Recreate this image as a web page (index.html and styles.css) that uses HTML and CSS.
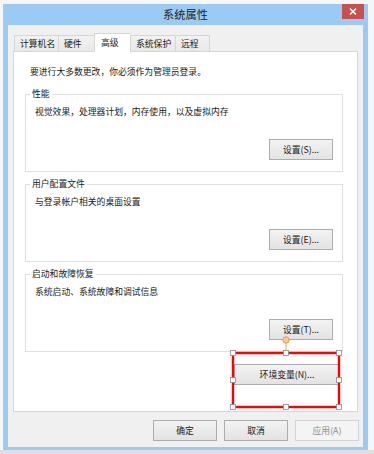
FILE: index.html
```html
<!DOCTYPE html>
<html lang="zh-CN">
<head>
<meta charset="utf-8">
<title>系统属性</title>
<link rel="stylesheet" href="styles.css">
</head>
<body>
<div class="window">
  <div class="titlebar">
    <span></span>
    <span class="title">系统属性</span>
    <span class="close"><svg width="22" height="15" viewBox="0 0 22 15"><path d="M8 4.5 L14 10.5 M14 4.5 L8 10.5" stroke="#fff" stroke-width="1.6"/></svg></span>
  </div>
  <div class="content">
    <div class="tabs">
      <div class="tab w44">计算机名</div>
      <div class="tab w36">硬件</div>
      <div class="tab w36 active">高级</div>
      <div class="tab w45">系统保护</div>
      <div class="tab w35 last">远程</div>
    </div>
    <div class="panel">
      <p class="note">要进行大多数更改，你必须作为管理员登录。</p>
      <div class="group g1">
        <div class="group-title">性能</div>
        <div class="desc">视觉效果，处理器计划，内存使用，以及虚拟内存</div>
        <div class="btn-row"><button class="btn">设置(S)...</button></div>
      </div>
      <div class="group">
        <div class="group-title">用户配置文件</div>
        <div class="desc">与登录帐户相关的桌面设置</div>
        <div class="btn-row"><button class="btn">设置(E)...</button></div>
      </div>
      <div class="group">
        <div class="group-title">启动和故障恢复</div>
        <div class="desc">系统启动、系统故障和调试信息</div>
        <div class="btn-row"><button class="btn">设置(T)...</button></div>
      </div>
      <div class="env-row"><button class="btn env">环境变量(N)...</button></div>
      <svg class="selection" width="116" height="78" viewBox="0 0 116 78">
        <line x1="58" y1="9" x2="58" y2="19" stroke="#f0a060" stroke-width="1"/>
        <circle cx="58" cy="6" r="3.2" fill="#fbc98a" stroke="#e8964a" stroke-width="1"/>
        <rect x="5" y="19" width="106" height="54" fill="none" stroke="#ff0000" stroke-width="2.4"/>
        <g fill="#fff" stroke="#8a8a8a" stroke-width="0.8">
          <rect x="2.5" y="16.5" width="5" height="5"/>
          <rect x="55.5" y="16.5" width="5" height="5"/>
          <rect x="108.5" y="16.5" width="5" height="5"/>
          <rect x="2.5" y="43.5" width="5" height="5"/>
          <rect x="108.5" y="43.5" width="5" height="5"/>
          <rect x="2.5" y="70.5" width="5" height="5"/>
          <rect x="55.5" y="70.5" width="5" height="5"/>
          <rect x="108.5" y="70.5" width="5" height="5"/>
        </g>
      </svg>
    </div>
    <div class="footer">
      <button class="btn">确定</button>
      <button class="btn">取消</button>
      <button class="btn disabled">应用(A)</button>
    </div>
  </div>
</div>
<div class="bottom-strip"></div>
</body>
</html>
```

FILE: styles.css
```css
* { box-sizing: border-box; }
html, body { margin: 0; padding: 0; }
body {
  background: #f6f6f6;
  font-family: "Noto Sans CJK SC", "Microsoft YaHei", sans-serif;
  font-size: 8.8px;
  color: #1a1a1a;
  width: 374px;
  height: 454px;
  overflow: hidden;
  padding-top: 4px;
}
.window {
  margin-left: 3px;
  width: 365px;
  height: 446px;
  background: #9bcbf4;
  padding: 0 5px 3px 5px;
  display: flex;
  flex-direction: column;
}
.titlebar {
  height: 21px;
  display: grid;
  grid-template-columns: 1fr auto 1fr;
  align-items: start;
}
.title {
  font-size: 11.2px;
  line-height: 21px;
  color: #222;
}
.close {
  justify-self: end;
  width: 22px;
  height: 15px;
  background: #c75050;
  margin-right: -1px;
  display: flex;
}
.content {
  flex: 1;
  background: #f0f0f0;
  padding: 8px 0 0 0;
  display: flex;
  flex-direction: column;
}
.tabs {
  display: flex;
  align-items: flex-end;
  height: 19px;
  margin-left: 6px;
  margin-bottom: -1px;
  position: relative;
  z-index: 1;
}
.tab {
  height: 17px;
  line-height: 16px;
  padding-left: 5px;
  background: linear-gradient(#f2f2f2, #e8e8e8);
  border: 1px solid #d6d6d6;
  border-right: none;
  border-bottom-color: #d6d6d6;
  white-space: nowrap;
}
.tab.last { border-right: 1px solid #d6d6d6; }
.tab.active {
  height: 19px;
  line-height: 17px;
  background: #fff;
  border-bottom-color: #fff;
  padding-left: 6px;
}
.tab.active + .tab { border-left-color: #d6d6d6; }
.w44 { width: 44px; }
.w36 { width: 36px; }
.w45 { width: 45px; }
.w35 { width: 35px; }
.panel {
  position: relative;
  margin-left: 5px;
  width: 345px;
  height: 361px;
  background: #fff;
  border: 1px solid #d6d6d6;
  padding: 14px 14px 0 11px;
}
.note {
  margin: 0 0 0 5px;
  line-height: 12px;
}
.group {
  margin-top: 12px;
  height: 78px;
  border: 1px solid #e0e0e0;
  padding: 0 9px 0 9px;
}
.group.g1 { margin-top: 16px; }
.group-title {
  margin-top: -7px;
  margin-left: -5px;
  padding: 0 2px;
  width: fit-content;
  background: #fff;
  line-height: 12px;
}
.desc {
  margin-top: 6px;
  line-height: 12px;
}
.btn-row {
  margin-top: 21px;
  display: flex;
  justify-content: flex-end;
}
.btn {
  font-family: inherit;
  font-size: 8.8px;
  color: #1a1a1a;
  width: 64px;
  height: 21px;
  padding: 0;
  border: 1px solid #adadad;
  background: linear-gradient(#f3f3f3, #e3e3e3);
  line-height: 19px;
}
.env-row {
  margin-top: 12px;
  display: flex;
  justify-content: flex-end;
  padding-right: 3px;
}
.btn.env { width: 106px; }
.selection {
  position: absolute;
  left: 214px;
  top: 282px;
}
.footer {
  display: flex;
  justify-content: flex-end;
  gap: 7px;
  padding: 8px 4px 0 0;
}
.btn.disabled {
  color: #8d8d8d;
  border-color: #d3d3d3;
  background: #f4f4f4;
}
.bottom-strip {
  height: 4px;
  background: #dedede;
}
```
